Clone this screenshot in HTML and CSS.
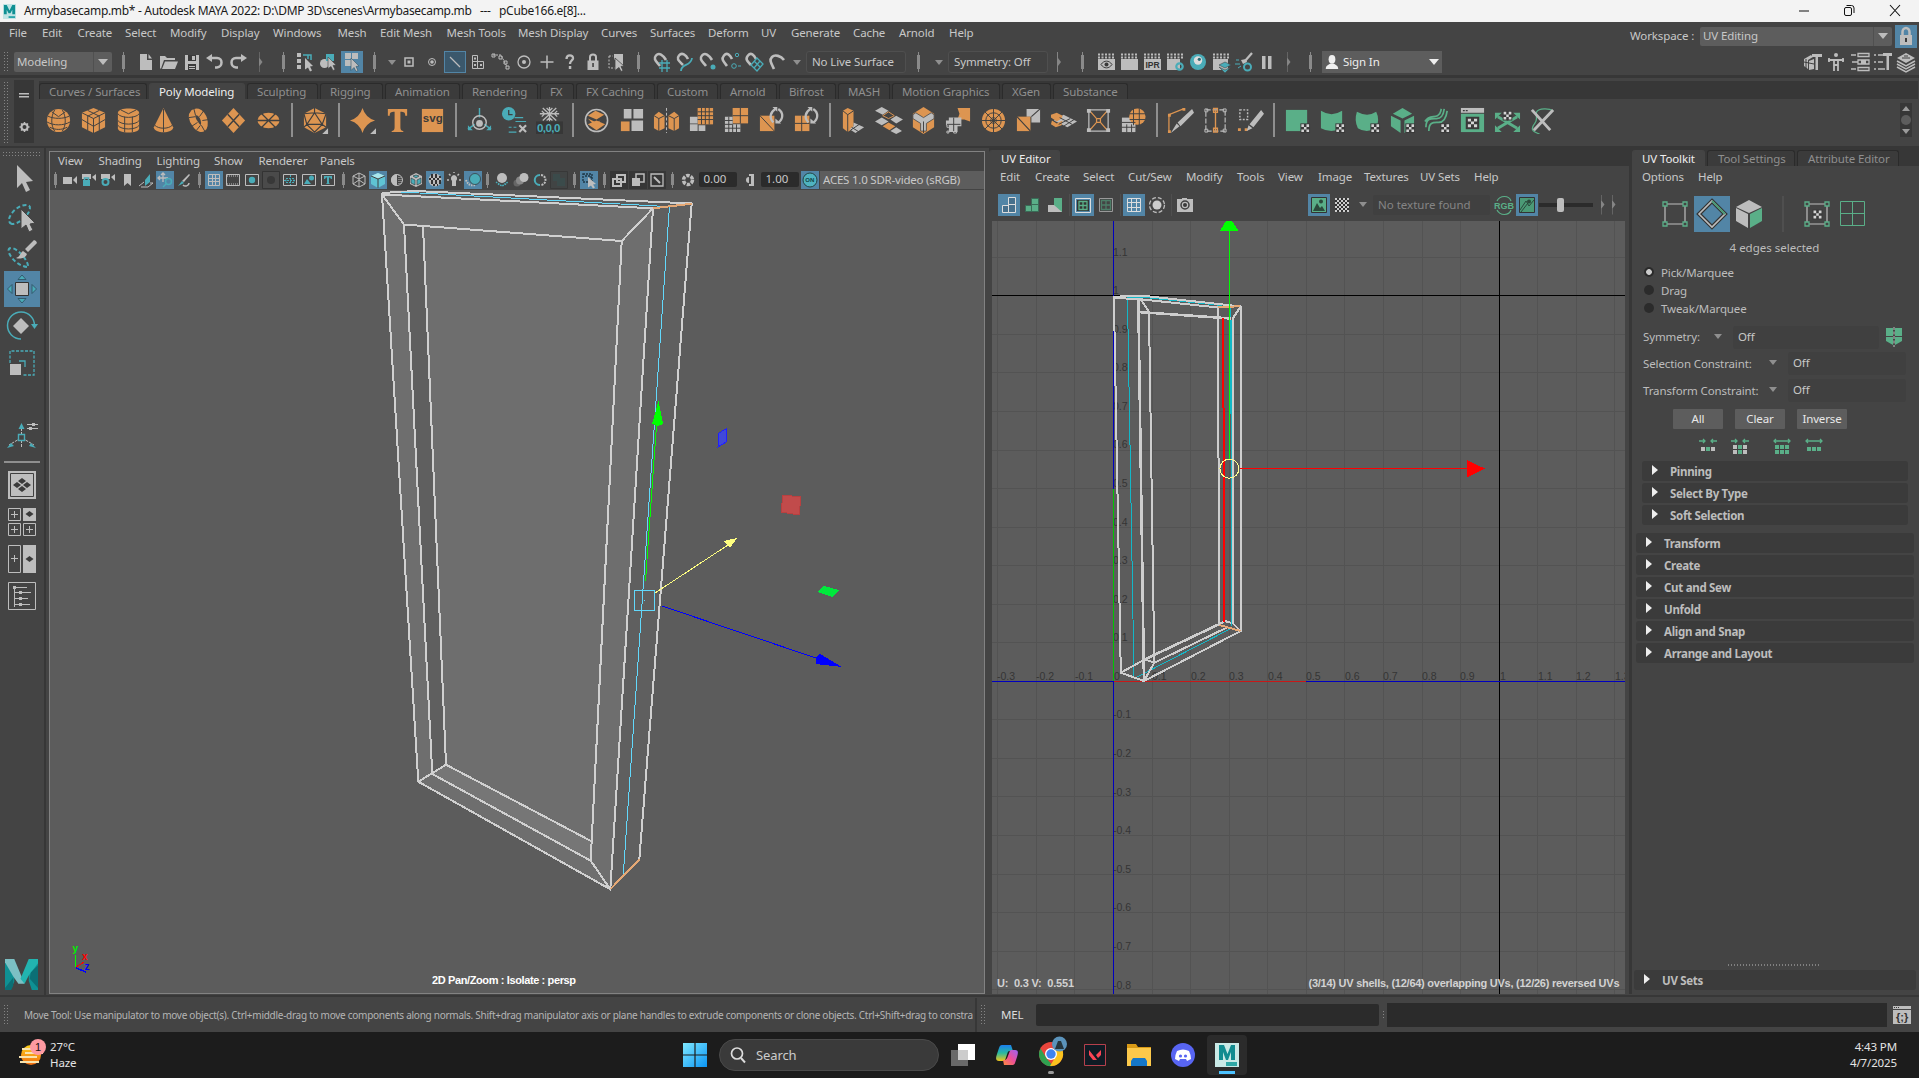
FILE: index.html
```html
<!DOCTYPE html>
<html lang="en">
<head>
<meta charset="utf-8">
<title>Armybasecamp.mb* - Autodesk MAYA 2022</title>
<link rel="stylesheet" href="styles.css">
</head>
<body>
<div class="app">
  <header class="titlebar">
    <svg class="title-logo" viewBox="0 0 14 16"><path fill="#bfe3e4" d="M0 0h14v16H0z"/><path fill="#0f8f93" d="M1 1h3l3 6 3-6h3v10h-3V6l-2 4H6L4 6v5H1z"/><path fill="#2aa5aa" d="M6 13h7v2H6z"/></svg>
    <span class="title-text">Armybasecamp.mb* - Autodesk MAYA 2022: D:\DMP 3D\scenes\Armybasecamp.mb &nbsp; --- &nbsp; pCube166.e[8]...</span>
    <svg class="win-btns" viewBox="0 0 110 14"><path d="M3 8h10M94 2l10 11M104 2L94 13" fill="none" stroke="#111" stroke-width="1.1"/><rect x="48.5" y="4.5" width="7" height="8" rx="1.500" fill="none" stroke="#111"/><path d="M50.500 2.500h5a2.500 2.500 0 0 1 2.500 2.500v5" fill="none" stroke="#111"/></svg>
  </header>

  <div class="menu-row">
    <nav class="menubar main-menu"><span>File</span><span>Edit</span><span>Create</span><span>Select</span><span>Modify</span><span>Display</span><span>Windows</span><span>Mesh</span><span>Edit Mesh</span><span>Mesh Tools</span><span>Mesh Display</span><span>Curves</span><span>Surfaces</span><span>Deform</span><span>UV</span><span>Generate</span><span>Cache</span><span>Arnold</span><span>Help</span></nav>
    <div class="workspace"><span class="ws-label">Workspace :</span><div class="combo ws-combo"><span>UV Editing</span><i class="caret"></i></div>
      <svg class="ws-lock on" viewBox="0 0 22 23"><path class="gs" stroke-width="2.500" d="M7.500 11V7a3.500 4 0 0 1 7 0v4"/><path class="g" d="M5 10h12v10H5z"/><path class="d" d="M10 13h2v4h-2z"/></svg></div>
  </div>

  <div class="status-line">
    <i class="dots-v"></i>
    <div class="combo mode-combo"><span>Modeling</span><i class="caret"></i></div>
    <i class="sep"></i>
    <svg viewBox="0 0 22 22"><path class="g" d="M5 3h7v6h5v10H5zM13.500 3l3.500 4.500h-3.500z"/></svg>
    <svg viewBox="0 0 22 22"><path class="g" d="M2 5h5l2 2h8v2H6L3.500 16 3 18l-1-1zM7 10.500h13L17 18H4z"/></svg>
    <svg viewBox="0 0 22 22"><path class="g" d="M4 4h14v15H4z"/><path class="d" d="M7 4h8v6H7zM7 13h8v6H7z"/><path class="g" d="M11 5h3v4h-3zM8 15h6v1H8zM8 17h6v1H8z"/></svg>
    <svg viewBox="0 0 22 22"><path class="g" d="M8 3v8L2 7z"/><path class="gs" stroke-width="2.500" d="M7 7h6c6 0 6 9 0 9.500h-2"/></svg>
    <svg viewBox="0 0 22 22"><path class="g" d="M14 3v8l6-4z"/><path class="gs" stroke-width="2.500" d="M15 7H9c-6 0-6 9 0 9.500h2"/></svg>
    <i class="sep tri"></i><i class="sep"></i>
    <svg viewBox="0 0 22 22"><path class="g" d="M2 2h4v4H2zM2 8h4v4H2zM2 14h4v4H2z"/><path class="cs" stroke-width="1.500" d="M8 4h5v4M13 4h3v5"/><path class="g" d="M10 7l8 8-3 .5 2 4-2 1-2-4-3 2z"/></svg>
    <svg viewBox="0 0 22 22"><circle class="g" cx="6.500" cy="12.500" r="4.500"/><path class="c" d="M8 3h8v7H8z"/><path class="g" stroke="#444" stroke-width=".6" d="M10 6l8 8-3 .5 2 4-2 1-2-4-3 2z"/></svg>
    <svg class="on" viewBox="0 0 22 22"><path class="g" d="M4 2h6v6H4zM11 2h6v6h-6zM4 9h6v6H4z"/><path class="g" stroke="#356" stroke-width=".6" d="M10 7l8 8-3 .5 2 4-2 1-2-4-3 3z"/></svg>
    <i class="sep"></i><i class="down"></i>
    <svg viewBox="0 0 22 22"><path class="gs" stroke-width="1.500" d="M7 7h8v8H7z"/><path class="g" d="M9.500 9.500h3v3h-3z"/></svg>
    <svg viewBox="0 0 22 22"><circle class="gs" cx="11" cy="11" r="3.500"/><circle class="g" cx="11" cy="11" r="1.800"/></svg>
    <svg class="picked" viewBox="0 0 22 22"><path class="gs" stroke-width="1.200" d="M6 6l10 10"/></svg>
    <svg viewBox="0 0 22 22"><path class="gs" d="M5.500 4.500h5v6h-5zM5.500 10.500h5v7h-5zM10.500 10.500h6v7h-6z"/><path class="g" d="M7 6.500h2v2H7zM7 13h2v2H7zM13 13h2v2h-2z"/></svg>
    <svg viewBox="0 0 22 22"><path class="gs" stroke-dasharray="2 1" d="M3 4h8l6 12"/><path class="gs" d="M2 3h3v3H2zM9 5h3v3H9zM14 10h3v3h-3zM16 15h3v3h-3z"/></svg>
    <svg viewBox="0 0 22 22"><circle class="gs" stroke-width="1.300" cx="11" cy="11" r="6"/><circle class="g" cx="11" cy="11" r="2"/></svg>
    <svg viewBox="0 0 22 22"><path class="gs" stroke-width="1.500" d="M11 4.500v13M4.500 11h13"/></svg>
    <svg viewBox="0 0 22 22"><path class="gs" stroke-width="2.300" d="M7.500 8c0-5 7-4.500 6.500-.5-.3 2-3 2.500-3 5.500"/><path class="g" d="M9.800 15h2.500v3H9.800z"/></svg>
    <svg viewBox="0 0 22 22"><path class="gs" stroke-width="2" d="M8 10V6c0-3.500 6-3.500 6 0v4"/><path class="g" d="M5.500 9.500h11V19h-11z"/><path class="d" d="M10.300 12h1.500v4h-1.500z"/></svg>
    <svg viewBox="0 0 22 22"><path class="gs" stroke-dasharray="2 1.500" d="M4 5h4M4 5v12h6"/><path class="g" d="M9 3h9v11h-4L9 8z"/><path class="g" stroke="#444" stroke-width=".8" d="M10 7l9 8-3 .5 2 4-2 1-2-4-4 3z"/></svg>
    <i class="sep"></i>
    <svg viewBox="0 0 22 22"><path class="gs" stroke-width="2.600" d="M9 15C5 10 2 8 5 4.500S12 4 15 9"/><path class="cs" stroke-width="1.300" d="M11 9v12M16 9v12M8 12h11M8 17h11"/></svg>
    <svg viewBox="0 0 22 22"><path class="gs" stroke-width="2.600" d="M9 14C5 10 2 8 5 4.500S12 4 14 8"/><path class="cs" stroke-width="1.800" d="M7 20c0-8 10-4 11-13"/></svg>
    <svg viewBox="0 0 22 22"><path class="gs" stroke-width="2.600" d="M9 15C5 10 2 8 5 4.500S12 4 15 9"/><circle class="c" cx="16" cy="16" r="2.500"/></svg>
    <svg viewBox="0 0 22 22"><path class="gs" stroke-width="2.600" d="M7 15C3 10 1 8 4 4.500S10 4 12 8"/><circle class="cs" cx="17" cy="4" r="1.700"/><circle class="cs" cx="14" cy="15" r="2.300"/><path class="cs" d="M18 15h3"/></svg>
    <svg viewBox="0 0 22 22"><path class="gs" stroke-width="2.600" d="M8 14C4 10 2 8 5 4.500S11 4 13 8"/><path class="cs" stroke-width="1.300" d="M8 14l6-7 6 6-6 7zM11 10l6 6M17 10l-6 7"/></svg>
    <svg viewBox="0 0 22 22"><path class="gs" stroke-width="2.600" d="M8 18C5 12 3 9 6 6s9-1 12 3"/></svg>
    <i class="down"></i>
    <div class="field">No Live Surface</div>
    <i class="sep"></i><i class="down"></i>
    <div class="field">Symmetry: Off</div>
    <i class="sep tri"></i><i class="sep"></i>
    <svg viewBox="0 0 22 22"><path class="clap" d="M3 3.500h17M3 6.500h17"/><path class="g" d="M3 8h17v11H3z"/><path class="ds" d="M6 13.500c3-4.500 8-4.500 11 0-3 4.500-8 4.500-11 0z"/><circle class="d" cx="11.500" cy="13.500" r="2"/></svg>
    <svg viewBox="0 0 22 22"><path class="clap" d="M3 3.500h17M3 6.500h17"/><path class="g" d="M3 8h17v11H3z"/></svg>
    <svg viewBox="0 0 22 22"><path class="clap" d="M3 3.500h17M3 6.500h17"/><path class="g" d="M3 8h17v11H3z"/><text class="ipr" x="4.500" y="17">IPR</text></svg>
    <svg viewBox="0 0 22 22"><path class="clap" d="M3 3.500h17M3 6.500h17"/><path class="g" d="M3 8h13v11H3z"/><circle class="cs" stroke-width="2.200" cx="15.500" cy="15.500" r="3.200"/></svg>
    <svg viewBox="0 0 22 22"><circle class="c" cx="11" cy="11" r="8"/><circle fill="#ddd" cx="11" cy="9.500" r="4.200"/><circle fill="#2a6a74" cx="12.300" cy="8.300" r="1.600"/></svg>
    <svg viewBox="0 0 22 22"><path class="clap" d="M3 3.500h17M3 6.500h17"/><path class="g" d="M3 8h15v11H3z"/><path class="c" stroke="#444" stroke-width=".6" d="M15 11l6 3-6 3-6-3zM9 16l6 3 6-3-6 6z"/></svg>
    <svg viewBox="0 0 22 22"><path class="gs" stroke-width="2.200" d="M19 2l-7 8"/><path class="g" d="M8 9l5-1 1 3-4 2z"/><circle class="cs" stroke-width="2" cx="14.500" cy="16" r="3.500"/><path class="cs" d="M3 9h3M2 13h5M5 17l3-2"/></svg>
    <svg viewBox="0 0 22 22"><path class="g" d="M6 5h3.500v13H6zM12 5h3.500v13H12z"/></svg>
    <i class="sep tri"></i><i class="sep"></i>
    <div class="signin"><svg viewBox="0 0 18 20"><ellipse fill="#eee" cx="9" cy="7" rx="3.800" ry="5"/><path fill="#eee" d="M2 18c0-4 3-5 5-6h4c2 1 5 2 5 6z"/></svg><span>Sign In</span><i class="caret"></i></div>
    <b></b>
    <svg viewBox="0 0 22 22"><path class="g" d="M2 8l7-4 2 2-5 3v9l-4-3zM7 10l5-2v10l-5 1z"/><path class="g" d="M10 3h10v3h-4v13h-2.500V6H10z"/><path class="ds" d="M2 11l10 2M4 8v10"/></svg>
    <svg viewBox="0 0 22 22"><circle class="g" cx="11" cy="4" r="2"/><path class="gs" stroke-width="1.800" d="M3 9h16M9 8v6h4V8M9 15v5M13 15v5M4 7v4M18 7v4"/></svg>
    <svg viewBox="0 0 22 22"><path class="gs" stroke-width="1.300" d="M2 4h5M9 2.500h11v3H9zM3 11h6M9 9h11v4H9zM2 18h5M9 16.500h11v3H9z"/><path class="g" d="M12 9h5v4h-5z"/></svg>
    <svg viewBox="0 0 22 22"><path class="gs" stroke-width="1.400" d="M2 4h2M6 4h7M2 11h2M6 11h5M2 18h2M6 18h7"/><path class="g" d="M11 2h9v3h-3v14h-2.500V5H11z"/></svg>
    <svg viewBox="0 0 22 22"><path class="g" d="M11 2l9 5-9 5-9-5z"/><path class="gs" stroke-width="1.500" d="M2 10l9 5 9-5M2 13l9 5 9-5M2 16l9 5 9-5"/><path class="ds" d="M7 7h8M9 5h4"/></svg>
  </div>

  <div class="shelf">
    <i class="dots-v"></i>
    <div class="shelf-ctl"><svg viewBox="0 0 20 63"><path class="g" d="M5 13h10v1.500H5zM5 16h10v1.500H5z"/><circle class="gs" stroke-width="2" cx="10.500" cy="47" r="3"/><path class="gs" stroke-width="1.500" d="M10.500 42v2M10.500 50v2M5.500 47h2M13.500 47h2M7 43.500l1.500 1.500M14 43.500L12.500 45M7 50.500L8.500 49M14 50.500L12.500 49"/></svg></div>
    <div class="shelf-main">
      <div class="shelf-tabs"><span>Curves / Surfaces</span><span class="active">Poly Modeling</span><span>Sculpting</span><span>Rigging</span><span>Animation</span><span>Rendering</span><span>FX</span><span>FX Caching</span><span>Custom</span><span>Arnold</span><span>Bifrost</span><span>MASH</span><span>Motion Graphics</span><span>XGen</span><span>Substance</span></div>
      <div class="shelf-icons">
        <svg viewBox="0 0 28 28"><circle class="o" cx="14" cy="14" r="12"/><path class="ds" d="M3 9.500c6 3 16 3 22 0M2 15.500c7 4 17 4 24 0M5 21c6 3 12 3 18 0M10 3c-4 7-4 16 0 22M18 3c4 7 4 16 0 22M7 5l7 5 7-5"/></svg>
        <svg viewBox="0 0 28 28"><path class="o" d="M14 1l12 5v15l-12 6-12-6V6z"/><path class="ds" d="M2 6l12 6 12-6M14 12v15M2 13l12 7 12-7M8 3.500l12 6V24M20 3.500L8 9.500V24"/></svg>
        <svg viewBox="0 0 28 28"><path class="o" d="M3 6c0-6 22-6 22 0v16c0 6-22 6-22 0z"/><path class="ds" d="M3 7c3 5 19 5 22 0M3 14c3 5 19 5 22 0M3 19c3 5 19 5 22 0M10 10v16M18 10v16M6 3l8 4 8-4"/></svg>
        <svg viewBox="0 0 28 28"><path class="o" d="M14 1l10 20c0 7-20 7-20 0z"/><path class="ds" d="M14 2v24M5 19c4 4 14 4 18 0"/></svg>
        <svg viewBox="0 0 28 28"><path fill="none" stroke="#dd9551" stroke-width="7" d="M9 6c6-4 12 5 11 13-1 6-7 3-9-1C8 14 6 9 9 6z"/><path class="ds" d="M9 1l2 8M4 11l7-1M7 20l6-4M12 24l4-5M25 13l-7 1M20 3l-5 7M21 26l-4-7"/></svg>
        <svg viewBox="0 0 28 28"><path class="o" d="M14 1l12 13-12 13L2 14z"/><path class="ds" stroke-width="1.500" d="M8 7.500l12 13M20 7.500l-12 13"/></svg>
        <svg viewBox="0 0 28 28"><ellipse class="o" cx="14" cy="14" rx="11.500" ry="8"/><path class="ds" stroke-width="1.300" d="M2 14h24M7 7l14 14M21 7L7 21"/></svg>
        <i class="rule"></i>
        <svg viewBox="0 0 28 28"><path class="o" d="M13 1l12 6v14l-12 6-11-6V7z"/><path class="ds" stroke-width="1.200" d="M13 1v5L5 18l8 8 8-8-8-12M2 7l11-1 12 1M5 18h16M2 7l3 11-3 3M25 7l-4 11 4 3"/><path class="g" d="M27 22v6h-6z"/></svg>
        <i class="rule"></i>
        <svg viewBox="0 0 28 28"><path class="o" d="M14 1q3 10 13 13-10 3-13 13-3-10-13-13 10-3 13-13z"/><path class="g" d="M28 22v6h-6z"/></svg>
        <svg viewBox="0 0 28 28"><path class="o" d="M4 2h20v7h-2c0-3-1-4-5-4v16c0 3 1 3.500 3 4v1H8v-1c2-.5 3-1 3-4V5C7 5 6 6 6 9H4z"/></svg>
        <svg viewBox="0 0 28 28"><path class="o" d="M3 2h22v24H3z"/><text x="4" y="16" class="svgt">svg</text></svg>
        <i class="rule"></i>
        <svg viewBox="0 0 28 28"><path class="cs" stroke-width="1.500" d="M14 1v10M9 18l-7 5M19 18l7 5"/><path class="c" d="M2 19v5h5zM26 19v5h-5z"/><circle class="gs" stroke-width="1.500" cx="14" cy="16" r="7"/><circle class="g" cx="14" cy="17" r="3.500"/></svg>
        <svg viewBox="0 0 28 28"><circle class="c" cx="8" cy="7" r="7"/><path class="ds" stroke-width="1.300" d="M8 3v5h4"/><path class="cs" stroke-width="1.200" d="M14 11h9M15 15h11M8 21h3M13 21h3M8 26h8"/><path class="gs" stroke-width="2.200" d="M19 19l7 7M26 19l-7 7"/></svg>
        <svg viewBox="0 0 28 28"><path class="gs" stroke-width="1.300" d="M14 0v15M4 7h20M7 1l14 13M21 1L7 14M11 1l3 3 3-3M11 14l3-3 3 3M6 4l3 3-3 3M22 4l-3 3 3 3"/><path fill="#373737" d="M0 15h28v13H0z"/><text class="zero" x="1" y="25.500">0,0,0</text></svg>
        <i class="rule"></i>
        <svg viewBox="0 0 28 28"><circle class="gs" stroke-width="1.600" cx="14" cy="14" r="11.500"/><path class="o" d="M13 4l9 4-8 5-9-4zM14 14l9 4-9 6-9-6z"/><path class="o" d="M5 12l9 4 4-2-5 6z"/></svg>
        <svg viewBox="0 0 28 28"><path class="g" d="M6 2h8v10H6zM16 2h10v10H16zM14 14h12v11H14z"/><path class="o" d="M3 15h9v10H3z"/></svg>
        <svg viewBox="0 0 28 28"><path class="o" d="M1 9l5-4 6 4v13l-6 3-5-3zM16 9l6-4 5 4v13l-5 3-6-3z"/><path class="ds" d="M1 9l5 3 6-3M6 12v13M16 9l6 3 5-3M22 12v13"/><path class="gs" stroke-dasharray="3 2" d="M14 1v26"/></svg>
        <svg viewBox="0 0 28 28"><path class="o" d="M10 1h16v17H10z"/><path class="g" d="M2 10h8v7H2zM2 18h8v7H2zM11 19h7v6h-7z"/><path class="ds" d="M14 1v17M18 1v17M22 1v17M10 5h16M10 9h16M10 13h16"/></svg>
        <svg viewBox="0 0 28 28"><path class="o" d="M10 1h16v16H10z"/><path class="ds" d="M18 1v16M10 9h16"/><path class="g" d="M2 10h8v8h8v8H2z"/><path class="ds" d="M6 10v16M10 18v8M14 18v8M2 14h8M2 18h8M2 22h16"/></svg>
        <svg viewBox="0 0 28 28"><path class="o" d="M2 9h15v16H2z"/><path class="ds" d="M2 9l15 16"/><path class="gs" stroke-width="2.400" d="M16 16c-5-5-3-11 2-14M21 2c6 4 5 11 0 14"/><path class="g" d="M15 0h5v5zM24 17h-6v-5z"/></svg>
        <svg viewBox="0 0 28 28"><path class="o" d="M2 9h15v16H2z"/><path class="ds" d="M9 9v16M2 17h15"/><path class="gs" stroke-width="2.400" d="M16 16c-5-5-3-11 2-14M21 2c6 4 5 11 0 14"/><path class="g" d="M15 0h5v5zM24 17h-6v-5z"/></svg>
        <i class="rule"></i>
        <svg viewBox="0 0 28 28"><path class="o" d="M3 4l5-3 6 3v18l-6 4-5-4z"/><path class="ds" d="M3 4l5 4 6-4M8 8v18"/><path class="g" d="M14 16l11 5-9 6-6-4 4-3z"/><path class="ds" d="M12 21l8 5M20 18l-9 6"/></svg>
        <svg viewBox="0 0 28 28"><path class="g" d="M7 0l7 4-6 4-8-4zM7 11l7 4-7 4-7-4zM22 9l7 4-7 4-6-4zM22 21l6 4-6 3-6-3z"/><path class="os" d="M14 5l6 4-6 3-6-3z"/><path class="o" d="M14 16l7 4-6 4-7-4z"/></svg>
        <svg viewBox="0 0 28 28"><path class="o" d="M14 0l11 7v14l-11 7-11-7V7z"/><path class="g" stroke="#444" stroke-width=".8" d="M3 8l3-2 8 5 8-5 3 2v4l-8 5v8h-6v-8l-8-5z"/><path class="ds" d="M14 15v12"/></svg>
        <svg viewBox="0 0 28 28"><path class="o" d="M13 1h13v14l-6-2h-7l2-6z"/><path class="g" d="M4 11h13v9h-4v6H4v-7H1v-5h3z"/><path class="gs" d="M2 18h3v3H2zM9 24h3v3H9zM2 25h2v2H2z"/><path class="ds" d="M9 11v14M2 18h14"/></svg>
        <svg viewBox="0 0 28 28"><circle class="o" cx="14" cy="14" r="12"/><circle class="ds" cx="14" cy="14" r="8"/><circle class="ds" cx="14" cy="14" r="3"/><path class="ds" d="M14 2v24M2 14h24M5 5l18 18M23 5L5 23"/></svg>
        <svg viewBox="0 0 28 28"><path class="g" d="M12 2h14v14h-9V10h-5z"/><path class="o" d="M2 10h14v15H2z"/><path class="ds" stroke-width="1.200" d="M2 10l14 15M26 2L17 10"/></svg>
        <svg viewBox="0 0 28 28"><path class="g" d="M14 8l14 7-10 6-14-7z"/><path class="o" d="M7 6l6 3-1 3-5 3-6-4V8zM2 14l5 3 6-3-1 5-6 2-5-3z"/><path class="ds" d="M9 18l12-6M14 20l11-7M10 11l13 7"/></svg>
        <svg viewBox="0 0 28 28"><path class="gs" stroke-width="1.300" d="M4 3h20v22H4z"/><path class="os" stroke-width="1.300" d="M5 4l7 8M23 4l-7 8M5 24l7-8M23 24l-7-8M12 12h4v4h-4z"/><path class="g" d="M2 2h4v4H2zM22 2h4v4h-4zM2 22h4v4H2zM22 22h4v4h-4z"/></svg>
        <svg viewBox="0 0 28 28"><path class="g" d="M2 11h14v15H2z"/><circle class="o" cx="18" cy="10" r="8.500"/><path class="ds" d="M14 2v17M20 2v17M10 7h16M10 13h16M7 18v8M12 18v8M2 16h14M2 21h14"/></svg>
        <i class="rule"></i>
        <svg viewBox="0 0 28 28"><path class="os" stroke-width="1.300" d="M2 26V8L17 2"/><path class="o" d="M1 7h3v3H1zM1 24h3v3H1zM16 1h3v3h-3z"/><path class="g" d="M26 2l2 4-14 14-3-4zM10 17l3 3-9 7z"/></svg>
        <svg viewBox="0 0 28 28"><path class="gs" stroke-width="1.200" d="M4 3h20v22H4z" stroke-dasharray="5 2"/><path class="os" stroke-width="1.400" d="M14 3v22M12 1.500h4v4h-4zM12 22h4v4h-4z"/><path class="gs" d="M3 2h3v3H3zM22 2h3v3h-3zM3 23h3v3H3zM22 23h3v3h-3z"/></svg>
        <svg viewBox="0 0 28 28"><path class="gs" stroke-dasharray="2 1.500" stroke-width="1.500" d="M3 3h8v10H3z"/><path class="o" d="M1 22h3v3H1zM8 22h3v3H8z"/><path class="g" d="M25 3l3 4-11 14-4-3zM12 19l4 3-6 3z"/></svg>
        <i class="rule"></i>
        <svg viewBox="0 0 28 28"><path class="n" d="M2 3h22v22H2z"/><use href="#chk" x="17" y="17"/></svg>
        <svg viewBox="0 0 28 28"><path class="n" d="M2 4q11 7 22 0v18q-11 6-22 0z"/><use href="#chk" x="17" y="17"/></svg>
        <svg viewBox="0 0 28 28"><path class="n" d="M3 5q11 6 20 0 4 8 0 17-10 6-19 0-4-8-1-17z"/><use href="#chk" x="17" y="17"/></svg>
        <svg viewBox="0 0 28 28"><path class="n" d="M14 1l10 6-10 5L4 7zM2 9l10 5v13L2 20zM26 9l-10 5v13l10-7z"/><use href="#chk" x="17" y="17"/></svg>
        <svg viewBox="0 0 28 28"><path class="ns" stroke-width="1.800" d="M2 21c0-10 6-9 11-9s7-3 8-10M5 25c0-10 5-9 10-9s8-4 9-12M1 15c4-7 9-4 13-6s3-5 4-7"/><use href="#chk" x="17" y="17"/></svg>
        <svg viewBox="0 0 28 28"><path class="g" d="M2 1h24v5H2z"/><path class="n" d="M2 7h24v19H2z"/><path class="d" d="M4 3h2v1.500H4zM7 3h2v1.500H7zM7 10h14v13H7z"/><use href="#chk" transform="translate(8 11) scale(1.200 1.100)"/></svg>
        <svg viewBox="0 0 28 28"><path class="ns" stroke-width="3" d="M4 10l20 12M24 10L4 22"/><path class="n" d="M1 6h7l-7 7zM27 6h-7l7 7zM1 26h7l-7-7zM27 26h-7l7-7z"/><use href="#chk" x="9" y="4"/></svg>
        <svg viewBox="0 0 28 28"><path class="ns" stroke-width="1.300" d="M11 28c-9-3-9-6-5-11s0-8 2-12 13-4 17-1"/><path class="gs" stroke-width="3" d="M3 3l19 21M25 3L5 24"/></svg>
      </div>
    </div>
    <svg class="shelf-scroll" viewBox="0 0 12 34"><path fill="#373737" d="M0 0h12v34H0z"/><path fill="#9a9a9a" d="M6 3l4 5H2zM6 31l4-5H2z"/><circle fill="#5d5d5d" cx="6" cy="17" r="5"/></svg>
  </div>

  <main class="work">
    <aside class="toolbox">
      <i class="dots-h"></i>
      <svg viewBox="0 0 36 36"><path class="g" d="M13 5l16 16-7 1 4 8-4 2-4-9-5 5z"/></svg>
      <svg viewBox="0 0 36 36"><path class="cs" stroke-width="2" stroke-dasharray="4 2.500" d="M8 27c-9-3 4-20 15-19 9 1-4 19-15 19z"/><path class="g" stroke="#444" d="M17 12l14 14-5 1 3 6-4 2-3-7-5 4z"/></svg>
      <svg viewBox="0 0 36 36"><path class="cs" stroke-width="2" stroke-dasharray="4 2.500" d="M23 33C9 31-1 13 8 14c9 2 19 18 15 19z"/><path class="g" d="M32 7l-2-1-9 9 3 3 9-9zM19 17l4 3c-2 5-8 5-11 4 4-1 4-5 7-7z"/></svg>
      <svg class="on" viewBox="0 0 36 36"><path class="g" stroke="#333" d="M11.500 11.500h13v13h-13z"/><path class="c" stroke="#2d4d5e" stroke-width=".8" d="M18 4l4 4.500h-8zM18 32l4-4.500h-8zM3.500 18L8 13.500v9zM32.500 18L28 13.500v9z"/></svg>
      <svg viewBox="0 0 36 36"><path class="cs" stroke-width="1.500" d="M17 31a13.500 13.500 0 1 1 13.500-13"/><path class="c" d="M27 16h7l-3.500 5z"/><path class="g" d="M17 10l8 8-8 8-8-8z"/></svg>
      <svg viewBox="0 0 36 36"><path class="cs" stroke-width="1.300" stroke-dasharray="3 1.500" d="M6 18V6h24v24H18M6 6v12"/><path class="cs" stroke-width="1.300" d="M15 16h6v6"/><path class="g" d="M6 19h11v11H6z"/></svg>
      <b></b>
      <svg viewBox="0 0 36 36"><path class="gs" stroke-dasharray="3 1" d="M17.500 9v20M17 19l-12 7M18 19l12 7"/><path fill="#444" stroke="#4aacb8" stroke-width="1.400" d="M14.500 15.500h6v6h-6z"/><path class="c" d="M17.500 4l3 6h-6zM3 29l4-5 3 3zM32 29l-5-5-2 3z"/><path class="gs" d="M23 5.500h11M23 9.500h11"/><path class="g" d="M28 4h3v3h-3zM25 8h3v3h-3z"/></svg>
      <i class="hr"></i>
      <svg viewBox="0 0 36 36"><path class="g" d="M4 4h28v28H4z"/><path class="ds" d="M6.500 6.500h23v23h-23z"/><path class="d" d="M18 11l4 3-4 3-4-3zM13 15l4 3-4 3-4-3zM23 15l4 3-4 3-4-3zM18 19l4 3-4 3-4-3z"/></svg>
      <svg viewBox="0 0 36 36"><path class="g" d="M19 4h13v13H19z"/><path class="d" d="M25.500 7l4 3-4 3-4-3z"/><path class="gs" d="M4.500 4.500h12v12h-12zM4.500 19.500h12v12h-12zM19.500 19.500h12v12h-12zM7 10.500h7M10.500 7v7M7 25.500h7M10.500 22v7M22 25.500h7M25.500 22v7"/></svg>
      <svg viewBox="0 0 36 36"><path class="g" d="M19 4h13v28H19z"/><path class="d" d="M25.500 15l4 3-4 3-4-3z"/><path class="gs" d="M4.500 4.500h12v27h-12zM7 17.500h7M10.500 14v7"/></svg>
      <svg viewBox="0 0 36 36"><path class="gs" d="M4.500 4.500h27v27h-27zM10.500 10v19M12 9.500h11M10 14.500h17M10 20.500h14M10 26.500h16"/><path class="g" d="M9 8h3v3H9zM15 13h3v3h-3zM15 19h3v3h-3zM15 25h3v3h-3z"/></svg>
      <svg class="maya-m" viewBox="0 0 32 30"><path fill="#0f9093" d="M0 1l9 12v9L5 30H0zM32 1v29h-6l-3-9V10z"/><path fill="#7cc0c4" d="M0 0h9l10 24h-6L8 17 0 3z"/><path fill="#22b4b0" d="M23 0h9v4L23 16l-4 8-4-5z"/><path fill="#0b6f75" d="M0 28l8-10v8l-2 4H0zM32 6v22l-8-9 1-6z"/></svg>
    </aside>

    <section class="viewport">
      <nav class="menubar vp-menu"><span>View</span><span>Shading</span><span>Lighting</span><span>Show</span><span>Renderer</span><span>Panels</span></nav>
      <div class="vp-tools">
        <i class="sep"></i>
        <svg viewBox="0 0 18 18"><path class="g" d="M2 6h9v7H2zM12 9l4-4v8z"/></svg>
        <svg viewBox="0 0 18 18"><path class="g" d="M2 3h9v5H2zM12 6l4-3v7z"/><path class="c" d="M3 9h7v6H3z"/><path class="cs" stroke-width="1.500" d="M4.500 9V7h4v2"/></svg>
        <svg viewBox="0 0 18 18"><path class="g" d="M2 3h9v5H2zM12 6l4-3v7z"/><circle class="cs" stroke-width="2" cx="6.500" cy="11" r="3"/></svg>
        <svg viewBox="0 0 18 18"><path class="g" d="M6 3h7v12l-3.500-3L6 15z"/></svg>
        <svg viewBox="0 0 18 18"><path class="c" d="M8 9l5-6v8l-5 4z"/><path class="gs" d="M2 15l5-4M13 12l3 0-5 4H4"/></svg>
        <svg class="on" viewBox="0 0 18 18"><path class="gs" stroke-width="1.300" d="M7 2v9M2 7h10M5 4l2-2 2 2M4 5L2 7l2 2"/><circle class="cs" stroke-width="1.500" cx="12.500" cy="10.500" r="3"/><path class="cs" stroke-width="1.500" d="M10 13l-3 3"/></svg>
        <svg viewBox="0 0 18 18"><path class="g" d="M14 3l1 1-6 7-2-1z"/><path class="c" d="M7 10l2 2-6 3z"/><path class="gs" stroke-width="1.500" d="M8 14c2 2 6 1 6-2"/></svg>
        <i class="sep"></i>
        <svg class="on" viewBox="0 0 18 18"><path class="gs" d="M3.500 3.500h11v11h-11zM7.500 3v12M10.500 3v12M3 7.500h12M3 10.500h12"/></svg>
        <svg viewBox="0 0 18 18"><path class="gs" d="M2.500 3.500h13v11h-13z"/><path class="gs" stroke-dasharray="1 1" d="M3 5h12M3 13h12"/></svg>
        <svg viewBox="0 0 18 18"><path class="gs" d="M2.500 3.500h13v11h-13z"/><circle class="c" cx="9" cy="9" r="3.200"/></svg>
        <svg viewBox="0 0 18 18"><path fill="#4a4a4a" stroke="#333" d="M.5.500h17v17H.5z"/><circle fill="#383838" cx="9" cy="9" r="4"/></svg>
        <svg viewBox="0 0 18 18"><path class="gs" d="M2.500 3.500h13v11h-13z"/><path class="cs" stroke-dasharray="2 1" d="M3 9.500h12M9.500 4v10M5 7.500h8v4H5z"/></svg>
        <svg viewBox="0 0 18 18"><path class="gs" d="M2.500 3.500h13v11h-13z"/><circle class="c" cx="11.500" cy="7" r="2.500"/><path class="c" d="M4 13l3-5 4 5z"/></svg>
        <svg viewBox="0 0 18 18"><path class="gs" d="M2.500 3.500h13v11h-13z"/><path class="c" d="M5 5h8v3h-1l-1-1.500h-1V12l1 1H7l1-1V6.500H7L6 8H5z"/></svg>
        <i class="sep"></i>
        <svg viewBox="0 0 18 18"><path class="gs" d="M9 2l6 3v8l-6 3-6-3V5zM3 5l6 3 6-3M9 2v14M3 13l6-4 6 4"/></svg>
        <svg class="on" viewBox="0 0 18 18"><path fill="#5fc3d3" d="M9 2l7 3v8l-7 4-7-4V5z"/><path fill="#a9e5ec" d="M9 2l7 3-7 3-7-3z"/><path class="ds" d="M2 5l7 3 7-3M9 8v9"/></svg>
        <svg viewBox="0 0 18 18"><circle class="gs" cx="9" cy="9" r="5.500"/><path class="g" d="M9 3v12A6 6 0 0 1 9 3z"/><path class="gs" stroke-dasharray="1 1" d="M11 4v10M13 6v7"/></svg>
        <svg viewBox="0 0 18 18"><path class="g" d="M9 2l6 3v8l-6 3-6-3V5z"/><path class="c" stroke="#333" stroke-width=".6" d="M9 4l3 1-3 2-3-2zM4 7l4 2v5l-4-2zM14 7l-4 2v5l4-2z"/></svg>
        <svg class="on" viewBox="0 0 18 18"><circle fill="#bbb" cx="9" cy="9" r="6.500"/><path stroke="#333" stroke-width="2" stroke-dasharray="2 2" d="M5 4h8M3 8h12M5 12h10" fill="none"/><path stroke="#333" stroke-width="2" stroke-dasharray="2 2" d="M5 6h10M5 10h10M7 14h5" fill="none"/></svg>
        <svg viewBox="0 0 18 18"><path class="g" d="M9 4a3.500 3.500 0 0 1 2 6v5H7v-5a3.500 3.500 0 0 1 2-6z"/><path class="gs" stroke-width="1.500" d="M2 9h2M14 9h2M4 3l1.500 1.500M14 3l-1.500 1.500M9 1v1"/></svg>
        <svg class="on" viewBox="0 0 18 18"><path class="gs" stroke-width="2" stroke-dasharray="1.500 1" d="M2 9c2 5 5 6 9 5"/><circle class="c" stroke="#333" stroke-width=".7" cx="11" cy="8" r="5.500"/></svg>
        <i class="sep"></i>
        <svg viewBox="0 0 18 18"><circle class="g" cx="9" cy="7" r="5"/><path class="cs" stroke-dasharray="1.500 1" stroke-width="1.500" d="M3 11l6 4 6-4M5 13l4 2 4-2"/></svg>
        <svg viewBox="0 0 18 18"><circle fill="#666" cx="5" cy="12" r="3.500"/><circle fill="#888" cx="8" cy="9.500" r="4"/><circle class="g" cx="12" cy="6.500" r="4.500"/></svg>
        <svg viewBox="0 0 18 18"><path class="cs" stroke-width="2" d="M9 4c-7 0-7 10 0 10"/><path class="gs" stroke-width="2" stroke-dasharray="2 1" d="M10 4c6 1 6 9 0 10"/></svg>
        <svg viewBox="0 0 18 18"><path fill="#414444" stroke="#383838" d="M.5.500h17v17H.5z"/><path fill="#3b4b4b" d="M3 3h7v4H7v3H3zM7 7h8v8H7z"/></svg>
        <i class="sep"></i>
        <svg class="on" viewBox="0 0 18 18"><path fill="none" stroke="#1f3746" stroke-width="1.400" stroke-dasharray="2 1" d="M3 3h9v8H3zM5 5h6v5"/><path class="g" d="M8 6l8 7-3 .5 2 3-2 1-2-3-3 2z"/></svg>
        <i class="sep"></i>
        <svg class="dk" viewBox="0 0 18 18"><path class="gs" stroke-width="2" d="M7 4h8v7H7zM3 8h8v7H3z"/></svg>
        <svg class="dk" viewBox="0 0 18 18"><path class="gs" stroke-width="1.500" d="M7 7V3h8v8h-4"/><path class="g" d="M3 7h8v8H3z"/></svg>
        <svg class="dk" viewBox="0 0 18 18"><path class="gs" stroke-width="1.300" d="M3 3h12v12H3z"/><path class="gs" stroke-width="2" d="M6 6l6 6"/></svg>
        <i class="sep"></i>
        <svg viewBox="0 0 18 18"><circle cx="9" cy="9" r="4.500" fill="none" stroke="#bdbdbd" stroke-width="3.500" stroke-dasharray="3.500 1.200"/></svg>
        <div class="num">0.00</div>
        <svg viewBox="0 0 18 18"><path class="g" d="M9 3h5v12H9v-2h2V5H9z"/><path class="g" d="M9 6v6a3 3 0 0 1 0-6z"/></svg>
        <div class="num">1.00</div>
        <svg class="on" viewBox="0 0 18 18"><circle fill="#4fb3c0" stroke="#244" cx="9" cy="9" r="7"/><text class="ont" x="4.300" y="11.300">ON</text></svg>
        <div class="aces">ACES 1.0 SDR-video (sRGB)</div>
      </div>
      <svg class="scene" viewBox="50 190 934 803" shape-rendering="crispEdges">
        <path fill="#6e6e6e" d="M382 193L653 208.300 610.300 889.300 418.300 781.700z"/>
        <path fill="#5f5f5f" d="M653 208.300l38.700-4.600-52.400 655.600-29 30zM404 224.500l19 1.500 23 538.700-13.700 9.300z"/>
        <path fill="#767676" d="M446 764.700l145.500 76.600-.8 19.400L432.300 774z"/>
        <g fill="none" stroke="#d0d0d0" stroke-width="2">
          <path d="M382 193l33-2 276.700 12.500L639.300 859.300M382 194.500l271 13.800-42.700 681-192-107.600zL404 224.500l217.700 16.500L653 208.300M404 224.500L432.300 774l158.400 86.700L621.700 241M423 226l23 538.700 145.500 76.600M418.300 781.700L446 764.700M590.700 860.700l19.600 28.600"/>
        </g>
        <g fill="none" stroke="#62d8fb"><path d="M401 192l265 14.500M669.500 206L623.300 874.700M634.500 590.500h20v20h-20z"/><path d="M644 600h1"/></g>
        <path fill="none" stroke="#e5a875" stroke-width="2" d="M653 208.300l38.700-4.600M610.300 889.300l29-30"/>
        <path stroke="#00ff00" d="M656.500 425L645.500 581"/><path fill="#00ff00" d="M658.500 401l4.500 23-5 2-6-2z"/>
        <path stroke="#ffff80" d="M655 593l73-48"/><path fill="#ffff80" d="M737 538l-7 10-6-7z"/>
        <path stroke="#0000ff" d="M662 606l154 52"/><path fill="#0000ff" d="M820 654l22 13-26-3v-7z"/>
        <path fill="#4048d8" stroke="#2020ff" d="M719 433l7.500-4.500-.5 13.500-8 5z"/>
        <path fill="#c14b4b" stroke="#b84040" d="M783 495l18 2-2 18-18-3z"/>
        <path fill="#00e83c" d="M817.300 592l6.700-6 15 4-6 7z"/>
        <path stroke="#00ff00" d="M75.500 955v12"/><path stroke="#ff0000" d="M76 967l8-5"/><path stroke="#0000ff" stroke-width="1.500" d="M76 968l10 4"/>
        <text class="axis" fill="#00f000" x="72.500" y="952">y</text><text class="axis" fill="#ff0000" x="82" y="960">x</text><text class="axis" fill="#0000ff" x="84.500" y="970">z</text>
        <text class="hud" x="432" y="984" textLength="144">2D Pan/Zoom : Isolate : persp</text>
      </svg>
    </section>

    <section class="uv-editor">
      <div class="dock-tabs"><span class="active">UV Editor</span></div>
      <nav class="menubar uv-menu"><span>Edit</span><span>Create</span><span>Select</span><span>Cut/Sew</span><span>Modify</span><span>Tools</span><span>View</span><span>Image</span><span>Textures</span><span>UV Sets</span><span>Help</span></nav>
      <div class="uv-tools">
        <svg class="on" viewBox="0 0 22 22"><path fill="#47708c" stroke="#ddd" d="M10.500 3.500h7v7h-7zM4.500 11.500h6v7h-6zM10.500 10.500h7v8h-7z"/></svg>
        <svg viewBox="0 0 22 22"><path class="n" stroke="#3a6b57" d="M10.500 4.500h7v6h-7zM4.500 11.500h6v6h-6zM10.500 10.500h7v7h-7z"/></svg>
        <svg viewBox="0 0 22 22"><path class="n" d="M10 4h8v7h-8z"/><path class="g" d="M4 11h14v7H4z"/><path class="n" d="M10 11h8v7z"/></svg>
        <i class="bar"></i>
        <svg class="on" viewBox="0 0 22 22"><path fill="none" stroke="#ddd" d="M3.500 4.500h15v14h-15z"/><path fill="#333" d="M5 6h12v11H5z"/><path class="ns" stroke-width="1.300" d="M7 7.500h8v8H7zM11 8v7M7 11.500h8"/></svg>
        <svg viewBox="0 0 22 22"><path fill="none" stroke="#999" d="M4.500 4.500h13v13h-13z"/><path fill="none" stroke="#4c7d67" stroke-width="1.300" d="M6.500 6.500h9v9h-9zM11 7v8M7 11h8"/></svg>
        <i class="bar"></i>
        <svg class="on" viewBox="0 0 22 22"><path fill="none" stroke="#ddd" d="M4.500 4.500h13v13h-13zM8.500 4v14M13.500 4v14M4 8.500h14M4 13.500h14"/></svg>
        <svg viewBox="0 0 22 22"><circle class="gs" stroke-dasharray="4 2" stroke-width="1.300" cx="11" cy="11" r="7.500"/><circle fill="#ccc" cx="11" cy="11" r="4.500"/></svg>
        <i class="bar"></i>
        <svg viewBox="0 0 22 22"><path class="g" d="M3 5h5V4h5v1h6v13H3z"/><circle class="ds" stroke-width="1.500" cx="11" cy="11" r="4"/><circle class="d" cx="11" cy="11" r="2"/></svg>
        <b></b>
        <svg class="on" viewBox="0 0 22 22"><path class="n" stroke="#333" d="M3.500 3.500h15v15h-15z"/><path fill="#2b4a3c" d="M5 17l4-8 3 5 2-2 3 5z"/><circle fill="#2b4a3c" cx="13" cy="7.500" r="2"/></svg>
        <svg viewBox="0 0 22 22"><path fill="#333" d="M4 4h14v14H4z"/><path fill="none" stroke="#ccc" stroke-width="2" stroke-dasharray="2 2" d="M4 5h14M4 9h14M4 13h14M4 17h14"/><path fill="none" stroke="#ccc" stroke-width="2" stroke-dasharray="2 2" d="M6 7h12M6 11h12M6 15h12"/></svg>
        <i class="down"></i>
        <div class="tex">No texture found</div>
        <svg viewBox="0 0 22 22"><path class="ns" stroke-width="1.200" d="M4 7c3-6 12-6 14 0M4 16c3 6 12 6 14 0"/><text class="rgb" x="1" y="14.500">RGB</text></svg>
        <svg class="on" viewBox="0 0 22 22"><path fill="#4b9a76" stroke="#333" d="M3.500 3.500h15v15h-15z"/><path fill="none" stroke="#2b4a3c" d="M4 16l6-9 3 5 5-6M5 18l7-9"/><circle fill="#2b4a3c" cx="13" cy="7.500" r="2"/></svg>
        <div class="slider"><i></i></div>
        <i class="sep tri tall"></i><i class="sep tri tall"></i>
      </div>
      <svg class="uv-canvas" viewBox="992 221 633 773" shape-rendering="crispEdges">
        <path fill="none" stroke="#535353" d="M997.500 221v773M1036.500 221v773M1074.500 221v773M1152.500 221v773M1190.500 221v773M1229.500 221v773M1267.500 221v773M1306.500 221v773M1344.500 221v773M1383.500 221v773M1422.500 221v773M1460.500 221v773M1537.500 221v773M1576.500 221v773M1614.500 221v773M992 257.500h633M992 334.500h633M992 372.500h633M992 411.500h633M992 450.500h633M992 488.500h633M992 527.500h633M992 565.500h633M992 604.500h633M992 642.500h633M992 719.500h633M992 758.500h633M992 796.500h633M992 835.500h633M992 874.500h633M992 912.500h633M992 951.500h633M992 989.500h633"/>
        <g class="gridnum">
          <text x="997" y="679.500">-0.3</text><text x="1036" y="679.500">-0.2</text><text x="1075" y="679.500">-0.1</text><text x="1114" y="679.500">0</text><text x="1152" y="679.500">0.1</text><text x="1191" y="679.500">0.2</text><text x="1229" y="679.500">0.3</text><text x="1268" y="679.500">0.4</text><text x="1306" y="679.500">0.5</text><text x="1345" y="679.500">0.6</text><text x="1383" y="679.500">0.7</text><text x="1422" y="679.500">0.8</text><text x="1460" y="679.500">0.9</text><text x="1500" y="679.500">1</text><text x="1538" y="679.500">1.1</text><text x="1576" y="679.500">1.2</text><text x="1615" y="679.500">1.3</text>
          <text x="1113" y="255.500">1.1</text><text x="1113" y="294">1</text><text x="1113" y="332.500">0.9</text><text x="1113" y="371">0.8</text><text x="1113" y="409.500">0.7</text><text x="1113" y="448">0.6</text><text x="1113" y="486.500">0.5</text><text x="1113" y="525.500">0.4</text><text x="1113" y="564">0.3</text><text x="1113" y="602.500">0.2</text><text x="1113" y="641">0.1</text><text x="1113" y="718">-0.1</text><text x="1113" y="756.500">-0.2</text><text x="1113" y="795.500">-0.3</text><text x="1113" y="834">-0.4</text><text x="1113" y="872.500">-0.5</text><text x="1113" y="911">-0.6</text><text x="1113" y="950">-0.7</text><text x="1113" y="988.500">-0.8</text>
        </g>
        <path stroke="#000" d="M992 295.500h633M1499.500 221v773"/>
        <path stroke="#0000c0" d="M992 681.500h633M1113.500 221v773"/>
        <path stroke="#c81818" d="M1114 681.500h192"/><path stroke="#00c800" d="M1113.500 489v192"/>
        <path fill="none" stroke="#12b8c8" d="M1127.500 299l6.500 378M1127 297h13l82 8.500M1230.500 307l1.500 319M1136 677.500l94-48.500"/>
        <g fill="none" stroke="#cecece" stroke-width="2">
          <path d="M1112.700 297l14-1 19 0 95 10.500v324.500l-96.700 50-23.200-8.300L1113.900 298l24 1 80 8.500 1.300 317"/>
          <path stroke-width="2.600" d="M1138.300 299l5.700 382M1138.400 312l92.600 6.500M1145 659.300l76-36"/>
          <path d="M1140 298l9 14 5.300 350.700L1227 627.500M1144 681l10.300-18.300-9.300-3.400-24.200 13.400M1240.400 307l-7.400 11v306M1219 624.500l6-3.500 8 2.500 7.500 7.500"/>
        </g>
        <path fill="none" stroke="#12b8c8" d="M1231.500 320v304"/>
        <path fill="none" stroke="#e5a875" stroke-width="2" d="M1218 307l22.400-.7M1219.600 625l20.800 6"/>
        <path stroke="#ff0000" stroke-width="2" d="M1223.300 318l.7 303.700"/>
        <path stroke="#00ff00" d="M1229.500 231v228"/><path fill="#00ff00" d="M1226 221h6l6.500 10h-18.500z"/>
        <path stroke="#ff0000" d="M1240 468.500h227"/><path fill="#ff0000" d="M1467 460l18 8.700-18 8.600z"/>
        <circle fill="none" stroke="#ffff90" cx="1229.400" cy="468.700" r="9.500"/>
        <text class="hud dim" x="997" y="987" xml:space="preserve" textLength="77">U:  0.3 V:  0.551</text>
        <text class="hud dim" x="1308.500" y="987" textLength="311">(3/14) UV shells, (12/64) overlapping UVs, (12/26) reversed UVs</text>
      </svg>
    </section>

    <aside class="toolkit">
      <div class="dock-tabs"><span class="active">UV Toolkit</span><span>Tool Settings</span><span>Attribute Editor</span></div>
      <nav class="menubar tk-menu"><span>Options</span><span>Help</span></nav>
      <div class="tk-modes">
        <svg viewBox="0 0 36 36"><path class="gs" stroke-width="1.200" d="M8 8h20v20H8z"/><path fill="#444" stroke="#5aaf88" stroke-width="1.300" d="M6 6h4v4H6zM26 6h4v4h-4zM6 26h4v4H6zM26 26h4v4h-4z"/></svg>
        <svg class="on" viewBox="0 0 36 36"><path fill="none" stroke="#333" stroke-width="4" d="M18 5l13 13-13 13L5 18z"/><path class="gs" stroke-width="1.600" d="M18 5l13 13-13 13L5 18z"/><path fill="none" stroke="#4b9a76" stroke-width="2" d="M18 5l13 13"/></svg>
        <svg viewBox="0 0 36 36"><path class="g" d="M18 4l13 7-13 6-13-6zM5 12l12 6v14L5 25z"/><path class="n" d="M31 12l-12 6v14l12-7z"/></svg>
        <i></i>
        <svg viewBox="0 0 36 36"><path class="gs" stroke-width="1.200" d="M8 8h20v20H8z"/><path fill="#444" stroke="#5aaf88" stroke-width="1.300" d="M6 6h4v4H6zM26 6h4v4h-4zM6 26h4v4H6zM26 26h4v4h-4z"/><use href="#chk" x="13.500" y="13.500"/></svg>
        <svg viewBox="0 0 36 36"><path class="ns" d="M5.500 5.500h24v24h-24zM17.500 6v24M6 17.500h24"/></svg>
      </div>
      <p class="sel-count">4 edges selected</p>
      <ul class="radios"><li class="checked">Pick/Marquee</li><li>Drag</li><li>Tweak/Marquee</li></ul>
      <div class="tk-row sym"><label>Symmetry:</label><i class="down"></i><div>Off</div><svg viewBox="0 0 18 20"><path class="n" d="M1 1h7v8H1zM10 1h7v8h-7zM1 10h7v8l-7-4zM10 10h7v4l-7 4z"/><path class="gs" stroke-dasharray="3 1.500" d="M9 0v20"/></svg></div>
      <div class="tk-row"><label>Selection Constraint:</label><i class="down"></i><div>Off</div></div>
      <div class="tk-row"><label>Transform Constraint:</label><i class="down"></i><div>Off</div></div>
      <div class="tk-btns"><button>All</button><button>Clear</button><button>Inverse</button></div>
      <div class="tk-grow">
        <svg viewBox="0 0 20 16"><path class="ns" stroke-width="1.300" d="M1 3h6M5 1l2 2-2 2M19 3h-6M15 1l-2 2 2 2"/><path class="g" d="M3 9h4v4H3zM13 9h4v4h-4z"/><path class="n" d="M8 9h4v4H8z"/></svg>
        <svg viewBox="0 0 20 16"><path class="ns" stroke-width="1.300" d="M1 3h6M5 1l2 2-2 2M19 3h-6M15 1l-2 2 2 2"/><path class="g" d="M3 7h4v9H3zM13 7h4v9h-4z"/><path class="n" d="M8 7h4v9H8z"/><path class="ds" d="M3 11.500h14"/></svg>
        <svg viewBox="0 0 20 16"><path class="ns" stroke-width="1.300" d="M2 3h16M4 1L2 3l2 2M16 1l2 2-2 2"/><path class="n" d="M3 7h4v9H3zM8 7h4v9H8zM13 7h4v9h-4z"/><path class="ds" d="M3 11.500h14"/></svg>
        <svg viewBox="0 0 20 16"><path class="ns" stroke-width="1.300" d="M2 3h16M4 1L2 3l2 2M16 1l2 2-2 2"/><path class="n" d="M3 9h4v4H3zM8 9h4v4H8zM13 9h4v4h-4z"/></svg>
      </div>
      <div class="folds inner"><h4>Pinning</h4><h4>Select By Type</h4><h4>Soft Selection</h4></div>
      <div class="folds"><h4>Transform</h4><h4>Create</h4><h4>Cut and Sew</h4><h4>Unfold</h4><h4>Align and Snap</h4><h4>Arrange and Layout</h4></div>
      <div class="uvsets"><i></i><h4>UV Sets</h4></div>
    </aside>
  </main>

  <footer class="cmdline">
    <i class="dots-v"></i><span class="help">Move Tool: Use manipulator to move object(s). Ctrl+middle-drag to move components along normals. Shift+drag manipulator axis or plane handles to extrude components or clone objects. Ctrl+Shift+drag to constra</span>
    <i class="split"></i><i class="dots-v"></i><span class="mel">MEL</span><div class="in"></div><i class="mini"></i><div class="out"></div>
    <svg viewBox="0 0 20 20"><path class="g" d="M1 1h18v3H1zM1 5h18v14H1z"/><path class="d" d="M2 2h1v1H2zM4 2h1v1H4zM6 2h1v1H6z"/><text x="4" y="15.500" class="brace">{;}</text></svg>
  </footer>

  <div class="taskbar">
    <svg class="weather" viewBox="0 0 28 30"><defs><linearGradient id="sun" x1="0" y1="0" x2="0" y2="1"><stop offset="0" stop-color="#ffd21c"/><stop offset="1" stop-color="#f06a10"/></linearGradient></defs><circle fill="url(#sun)" cx="12" cy="17" r="10"/><path stroke="#f8e3ae" stroke-width="2" d="M3 11h12M6 15h18M0 19h18M1 24h19"/><circle fill="#ff9aa2" cx="19" cy="9" r="8"/><text x="16" y="13" class="badge">1</text></svg>
    <div class="temp"><span>27°C</span><span>Haze</span></div>
    <div class="tb-center">
      <svg class="win" viewBox="0 0 24 24"><defs><linearGradient id="wg" x1="0" y1="0" x2="1" y2="1"><stop offset="0" stop-color="#7fe8ff"/><stop offset="1" stop-color="#0a95f5"/></linearGradient></defs><path fill="url(#wg)" d="M0 0h11.400v11.400H0zM12.600 0H24v11.400H12.600zM0 12.600h11.400V24H0zM12.600 12.600H24V24H12.600z"/></svg>
      <div class="search"><svg viewBox="0 0 18 18"><circle cx="8" cy="7.500" r="5.500" fill="none" stroke="#ddd" stroke-width="1.700"/><path stroke="#ddd" stroke-width="1.900" d="M12 12l4 4.500"/></svg><span>Search</span></div>
      <svg viewBox="0 0 24 24"><path fill="#fff" d="M7 1h17v16H7z"/><path fill="#777" fill-opacity=".85" d="M0 7h17v16H0z"/><path fill="#ccc" d="M7 7h10v10H7z"/></svg>
      <svg viewBox="0 0 24 24"><defs><linearGradient id="ca" x1="0" y1="0" x2="0" y2="1"><stop offset="0" stop-color="#1b7ff0"/><stop offset=".5" stop-color="#27b9a0"/><stop offset="1" stop-color="#f2c517"/></linearGradient><linearGradient id="cb" x1="1" y1="0" x2="0" y2="1"><stop offset="0" stop-color="#9a63f5"/><stop offset=".5" stop-color="#ec4f9a"/><stop offset="1" stop-color="#ff8a3c"/></linearGradient></defs><path fill="url(#ca)" d="M7 2h9l2 6h-4c-2 0-3 10-5 10H4C0 18 1 14 2 11l2-6c.5-2 1.500-3 3-3z"/><path fill="url(#cb)" d="M17 22H9l-1-5h2c3 0 4-10 6-10h4c4 0 3 4 2 7l-2 6c-.5 1.500-1.500 2-3 2z"/></svg>
      <svg class="chrome" viewBox="0 0 28 38"><circle fill="#e8453c" cx="12" cy="18" r="12"/><path fill="#2fa150" d="M1.500 12.500L8 23l6 7A12 12 0 0 1 1.500 12.500z"/><path fill="#fcc31e" d="M23 13a12 12 0 0 1-12 17l6-10-1-7z"/><circle fill="#fff" cx="12" cy="18" r="6"/><circle fill="#3f83f0" cx="12" cy="18" r="4.700"/><circle fill="#5b93bb" cx="20.500" cy="8" r="7.500"/><path fill="#26353d" d="M19 5h3l3 8h-9z"/><rect fill="#9a9a9a" x="9" y="35" width="6" height="3" rx="1.500"/></svg>
      <svg viewBox="0 0 24 24"><path fill="#0f1b24" stroke="#b5404c" d="M1.500 1.500h21v21h-21z"/><path fill="#fa4454" d="M6 7l8 10h-4l-4-5zM18 7v5l-3 3-2-3z"/></svg>
      <svg viewBox="0 0 24 24"><path fill="#d99a16" d="M0 1h9l2 3h13v5H0z"/><path fill="#fcc94b" d="M0 5h24v18H0z"/><path fill="#1477c9" d="M4 23v-5l2-3h12l2 3v5z"/></svg>
      <svg viewBox="0 0 24 24"><circle fill="#5865f2" cx="12" cy="12" r="12"/><path fill="#fff" d="M6 8q6-3 12 0 2 4 2 8l-4 2-1-2H9l-1 2-4-2q0-4 2-8z"/><circle fill="#5865f2" cx="9.500" cy="13" r="1.600"/><circle fill="#5865f2" cx="14.500" cy="13" r="1.600"/></svg>
      <div class="tb-active"><svg viewBox="0 0 24 24"><path fill="#c9e9e6" d="M0 0h24v24H0z"/><path fill="#128c90" d="M4 2h5l3.500 9L16 2h4v15h-4V9l-3 8h-2L8 9v8H4z"/><path fill="#2fa7a5" d="M11 19h11v4H11z"/></svg></div>
    </div>
    <div class="clock"><span>4:43 PM</span><span>4/7/2025</span></div>
  </div>
</div>
<svg width="0" height="0" class="defs"><defs><g id="chk"><path fill="#3a3a3a" d="M0 0h10v10H0z"/><path fill="#d4d4d4" d="M1 1h2.700v2.700H1zM6.300 1H9v2.700H6.300zM3.700 3.700h2.600v2.600H3.700zM1 6.300h2.700V9H1zM6.300 6.300H9V9H6.300z"/></g></defs></svg>
</body>
</html>
```

FILE: styles.css
```css
* { box-sizing: border-box; margin: 0; padding: 0; }
body { background: #444; color: #c8c8c8; font: 11.5px/14px "Noto Sans", "Open Sans", sans-serif; letter-spacing: -.12px; overflow: hidden; }
.app { width: 1919px; height: 1078px; display: grid; grid-template-rows: 22px 24px 30px 72px 848.5px 35.5px 46px; white-space: nowrap; }
svg { display: block; }
i { display: block; font-style: normal; }
.defs { position: absolute; }

/* icon paint */
.g { fill: #bdbdbd; } .c { fill: #4aacb8; } .o { fill: #dd9551; } .n { fill: #5aaf88; } .d { fill: #3a3a3a; }
.gs, .cs, .os, .ns, .ds { fill: none; }
.gs { stroke: #bdbdbd; } .cs { stroke: #4aacb8; } .os { stroke: #dd9551; } .ns { stroke: #5aaf88; } .ds { stroke: #3f3f3f; }
.clap { stroke: #bdbdbd; stroke-width: 2; stroke-dasharray: 2 1.5; fill: none; }
.on { background: #5285a6; }
.ipr, .svgt, .zero, .ont, .rgb, .brace, .badge { font-family: "Liberation Sans", sans-serif; letter-spacing: 0; }
.ipr { font-size: 8.5px; font-weight: bold; fill: #333; }
.svgt { font-size: 12px; font-weight: bold; fill: #3a3a3a; }
.zero { font-size: 12px; fill: #4aacb8; font-weight: bold; letter-spacing: -.6px; }
.ont { font-size: 6px; font-weight: bold; fill: #144; }
.rgb { font-size: 9px; fill: #5aaf88; font-weight: bold; }
.brace { font-size: 11px; font-weight: bold; fill: #333; }
.badge { font-size: 11px; fill: #201010; }

/* title bar */
.titlebar { background: #f3f3f3; color: #1a1a1a; display: flex; align-items: center; padding: 0 13px 0 3px; }
.title-logo { width: 13px; height: 15px; margin-right: 8px; }
.title-text { font-size: 12px; letter-spacing: -.31px; flex: 1; }
.win-btns { width: 110px; height: 14px; margin-top: -3px; }

/* menus */
.menubar { display: grid; align-items: center; }
.menu-row { display: flex; justify-content: space-between; align-items: flex-start; }
.main-menu { height: 21px; padding-left: 9px; grid-template-columns: 33px 35.5px 47.5px 45px 51px 52px 64.5px 42.5px 66.5px 71.5px 83px 49px 58px 53px 30px 62px 46px 50px auto; }
.workspace { display: flex; align-items: center; height: 27px; padding: 1px 2px 0 0; }
.ws-label { width: 70px; }
.combo { background: #5d5d5d; height: 20px; display: flex; align-items: center; justify-content: space-between; padding-left: 3px; border-radius: 2px; }
.caret { width: 19px; height: 100%; border-left: 1px solid #505050; display: grid; place-items: center; }
.caret::after, .down::after { content: ""; border: 5px solid transparent; border-top: 6px solid #bdbdbd; border-bottom: 0; }
.down { display: grid; place-items: center; }
.down::after { border-width: 5px 4px 0; border-top-color: #8f8f8f; }
.ws-combo { width: 192px; height: 19px; margin-right: 3px; }
.ws-lock { width: 22px; height: 23px; }

/* status line */
.status-line { display: grid; align-items: center; justify-items: center; padding: 3px 1px 0 3px; border-bottom: 1px solid #373737;
  grid-template-columns: 11px 98px 22px repeat(5, 23px) 23px 22px repeat(3, 23px) 23px 11px repeat(10, 23px) 23px repeat(6, 23px) 18px 100px 24px 18px 100px 22px 24px repeat(8, 23px) 21px 23px 120px 1fr repeat(5, 23.3px); }
.status-line > svg { width: 22px; height: 22px; }
.picked { background: #3b586c; outline: 1px solid #5285a6; outline-offset: -1px; }
.mode-combo { width: 98px; }
.dots-v { width: 5px; height: 22px; background: radial-gradient(circle, #858585 .7px, transparent .9px) 0 0 / 3px 3px; justify-self: start; }
.sep { width: 3px; height: 20px; background: linear-gradient(#8a8a8a, #8a8a8a) center / 1px 100% no-repeat, linear-gradient(#8a8a8a, #8a8a8a) center / 3px 70% no-repeat; }
.sep.tri { width: 4px; background: #858585; clip-path: polygon(0 0, 25% 0, 25% 30%, 100% 50%, 25% 70%, 25% 100%, 0 100%); }
.field { width: 100px; height: 22px; border: 1px solid #4f4f4f; border-radius: 3px; background: #414141; padding: 3px 5px; }
.signin { width: 120px; height: 22px; background: #5d5d5d; color: #eee; display: flex; align-items: center; }
.signin svg { width: 16px; height: 18px; margin: 0 3px 0 2px; }
.signin span { flex: 1; }
.signin .caret { border: 0; width: 16px; }
.signin .caret::after { border-top-color: #eee; }

/* shelf */
.shelf { display: grid; grid-template-columns: 11px 25px 1861px 1fr; border-top: 2px solid #373737; border-bottom: 2px solid #373737; padding: 3px 2px 0 3px; }
.shelf > .dots-v { height: 62px; }
.shelf-ctl { background: #373737; width: 20px; height: 63px; margin-top: -1px; }
.shelf-ctl svg { width: 20px; height: 63px; }
.shelf-tabs { background: #373737; height: 18px; width: 1879px; padding-top: 2px; display: grid; color: #8f8f8f; grid-template-columns: 110px 98px 73px 65px 77px 78px 36px 81px 63px 59px 59px 54px 110px 51px 77px; }
.shelf-tabs span, .dock-tabs span { border: 1px solid #2b2b2b; border-bottom: 0; border-radius: 3px 3px 0 0; margin-right: 2px; padding-left: 9px; background: #3b3b3b; }
.shelf-tabs span { padding-top: 1px; }
.shelf-tabs .active, .dock-tabs .active { background: #444; border-color: #444; color: #eee; }
.shelf-icons { display: flex; align-items: center; height: 42px; padding-left: 2px; }
.shelf-icons svg { width: 35px; height: 27px; }
.rule { width: 2px; height: 34px; margin: 0 5px; background: #8f8f8f; }
.shelf-scroll { width: 12px; height: 34px; margin-top: 22px; }

/* work area */
.work { display: grid; grid-template-columns: 49px 936px 7px 633px 7px 1fr; border-bottom: 2px solid #373737; }
.toolbox { display: flex; flex-direction: column; padding: 3px 3px 0 4px; border-right: 2px solid #373737; width: 46px; background: #444; }
.toolbox > svg { width: 36px; height: 36px; margin-bottom: 1px; flex: none; }
.dots-h { width: 38px; height: 6px; margin: 0 0 2.5px -2px; background: radial-gradient(circle, #858585 .7px, transparent .9px) 0 0 / 3px 3px; }
.toolbox b { height: 37px; }
.hr { height: 2px; width: 36px; background: #8f8f8f; margin: 5px 0 4px; flex: none; }
.toolbox > .maya-m { width: 33px; height: 31px; margin: auto 0 5px 1px; }

.viewport { border: 1px solid #828282; margin: 3px 0 0 0; width: 936px; height: 843px; display: grid; grid-template-rows: 18px 19px 804px; }
.vp-menu { padding-left: 8px; grid-template-columns: 40.5px 58px 57.5px 44.5px 61.5px auto; }
.vp-tools { display: grid; align-items: center; justify-items: center; grid-template-columns: 10.5px repeat(7, 19px) 11px repeat(7, 19px) 11.5px repeat(7, 19px) 10.5px repeat(4, 19px) 11px 19px 11px repeat(3, 19px) 12px 19px 40px 22.5px 39px 21px 1fr; }
.vp-tools svg { width: 18px; height: 18px; }
.vp-tools .sep { height: 16px; }
.dk { background: #373737; }
.num { background: #2b2b2b; width: 38px; height: 15px; border-radius: 2px; padding-left: 5px; letter-spacing: 0; }
.aces { background: #5d5d5d; width: 100%; height: 18px; padding: 2px 0 0 3px; justify-self: start; letter-spacing: -.22px; }
.scene { background: #5c5c5c; width: 934px; height: 803px; margin-top: 1px; }
.hud { font: bold 11px "Liberation Sans", sans-serif; fill: #fff; letter-spacing: 0; }
.hud.dim { fill: #d2d2d2; }
.axis { font: bold 10px "Liberation Sans", sans-serif; }
.gridnum { font: 10.5px "Liberation Sans", sans-serif; fill: #353535; letter-spacing: 0; }

.uv-editor { grid-column: 4; display: grid; grid-template-rows: 18px 22px 33px 773px; }
.uv-editor .dock-tabs, .toolkit .dock-tabs { background: #373737; }
.dock-tabs { display: flex; padding-top: 2px; height: 18px; }
.uv-editor .dock-tabs { margin: 0 -7px 0 -3px; }
.dock-tabs .active { padding: 1px 10px 0; }
.uv-editor .dock-tabs .active { width: 71px; padding-left: 11px; }
.uv-menu { padding-left: 8px; grid-template-columns: 35px 48px 45px 58px 51px 41px 40px 46px 56px 54px auto; }
.uv-tools { display: grid; align-items: center; justify-items: center; padding: 0 6px 0 5.5px; grid-template-columns: repeat(3, 23px) 5px repeat(2, 23px) 5px repeat(2, 23px) 5px 23px 1fr repeat(2, 23px) 20px 119px repeat(2, 23px) 59px 11px 11px; }
.uv-tools svg { width: 22px; height: 22px; }
.bar { width: 1px; height: 22px; background: #4f4f4f; }
.tex { background: #404040; color: #858585; width: 117px; height: 20px; padding: 3px 0 0 5px; justify-self: start; border-radius: 2px; letter-spacing: 0; }
.slider { width: 54px; height: 14px; margin-left: -3px; background: linear-gradient(#2b2b2b, #2b2b2b) center / 100% 4px no-repeat; }
.slider i { width: 7px; height: 14px; margin-left: 18px; background: #bdbdbd; border-radius: 2px; }
.uv-canvas { background: #5c5c5c; width: 633px; height: 773px; }

/* toolkit */
.toolkit { grid-column: 6; display: flex; flex-direction: column; color: #bdbdbd; box-shadow: -4px 0 0 -1px #373737; }
.toolkit .dock-tabs { flex: none; }
.toolkit .dock-tabs span { width: 88px; padding: 1px 0 0 10px; color: #8f8f8f; }
.toolkit .dock-tabs .active { width: 73px; padding-left: 9px; color: #eee; }
.toolkit .dock-tabs span:last-child { width: 102px; }
.tk-menu { height: 22px; padding-left: 10px; grid-template-columns: 56px auto; flex: none; color: #c8c8c8; }
.tk-modes { display: grid; grid-template-columns: 37px 37px 37px 31px 36px 37px; height: 36px; padding-left: 25px; margin-top: 8px; flex: none; }
.tk-modes svg { width: 36px; height: 36px; }
.tk-modes i { width: 2px; background: #4f4f4f; margin-left: 14px; }
.sel-count { margin: 9px 0 9px; text-align: center; padding-right: 2px; letter-spacing: 0; }
.radios { list-style: none; }
.radios li { height: 18px; padding-left: 12px; display: flex; align-items: center; gap: 7px; }
.radios li::before { content: ""; width: 10px; height: 10px; border-radius: 50%; background: #2b2b2b; margin-top: -3px; }
.radios .checked::before { background: radial-gradient(circle, #ccc 2.5px, #2b2b2b 3.2px); }
.tk-row { display: grid; grid-template-columns: 114px 31px 118px; align-items: center; height: 27px; padding-left: 11px; }
.tk-row.sym { grid-template-columns: 59px 31px 146px 1fr; height: 24px; margin: 7px 0 1px; }
.tk-row div { background: #404040; height: 23px; padding: 4px 5px; border-radius: 3px; color: #c8c8c8; }
.tk-row .down::after { margin-top: -2px; }
.tk-row svg { width: 18px; height: 20px; margin-left: 6px; }
.tk-btns { display: flex; gap: 12px; padding: 5px 0 0 41px; }
.tk-btns button { width: 50px; height: 20px; background: #5d5d5d; color: #e8e8e8; font: inherit; letter-spacing: inherit; border: 0; border-radius: 1px; }
.tk-grow { display: grid; grid-template-columns: 32px 42px 32px 20px; padding: 9px 0 7px 66px; }
.tk-grow svg { width: 20px; height: 16px; }
.folds { display: grid; gap: 2px; padding: 0 5px 0 4px; }
.folds.inner { padding: 0 11px 0 10px; margin-bottom: 8px; }
h4 { height: 20px; background: #3b3b3b; border-radius: 3px; font-size: 11.5px; letter-spacing: -.3px; display: flex; align-items: center; gap: 12px; padding: 2px 0 0 10px; color: #bdbdbd; }
h4::before { content: ""; border: 5.5px solid transparent; border-left: 6px solid #eee; border-right: 0; margin-top: -5px; }
.uvsets { margin-top: auto; padding: 0 3px 4.5px 2px; }
.uvsets i { width: 92px; height: 2px; margin: 0 0 4px 94px; background: repeating-linear-gradient(90deg, #808080 0 1px, transparent 1px 3px); }

/* command line */
.cmdline { display: grid; grid-template-columns: 21px 951px 5px 21px 35px 343px 8px 500px 1fr; align-items: center; padding: 1px 0 0 3px; }
.help { font-size: 10px; letter-spacing: -.27px; color: #b4b4b4; overflow: hidden; width: 951px; }
.split { width: 2px; height: 100%; background: #373737; }
.mel { color: #ddd; }
.in { background: #2b2b2b; height: 22px; border-radius: 2px; }
.out { background: #2b2b2b; height: 24px; }
.mini { width: 1px; height: 8px; margin-left: 4px; background: repeating-linear-gradient(#888 0 1px, transparent 1px 3px); }
.cmdline svg { width: 20px; height: 20px; margin-left: 5px; }

/* taskbar */
.taskbar { background: #1c1c1c; display: grid; grid-template-columns: 50px 633px 1fr auto; align-items: center; color: #e4e4e4; font-size: 12px; padding-right: 22px; }
.weather { width: 28px; height: 30px; margin: -4px 0 0 19px; }
.temp, .clock { display: grid; line-height: 16px; }
.temp { font-size: 11.5px; }
.clock { text-align: right; font-size: 11.5px; }
.tb-center { display: flex; align-items: center; height: 46px; }
.tb-center > svg { width: 24px; height: 24px; margin-right: 20px; }
.tb-center > .chrome { width: 28px; height: 38px; margin-right: 16px; }
.tb-center > .win { margin-right: 12px; }
.search { width: 220px; height: 32px; border-radius: 16px; background: #3a3a3a; border: 1px solid #4a4a4a; display: flex; align-items: center; padding-left: 9px; margin-right: 12px; color: #ccc; font-size: 13px; }
.search svg { width: 18px; height: 18px; margin-right: 9px; }
.tb-active { width: 40px; height: 40px; margin-left: -8px; background: linear-gradient(#4cc2ff, #4cc2ff) 50% 36px / 16px 3px no-repeat, #2b2b2b; border-radius: 4px; padding: 8px; }
.tb-active svg { width: 24px; height: 24px; }
```
